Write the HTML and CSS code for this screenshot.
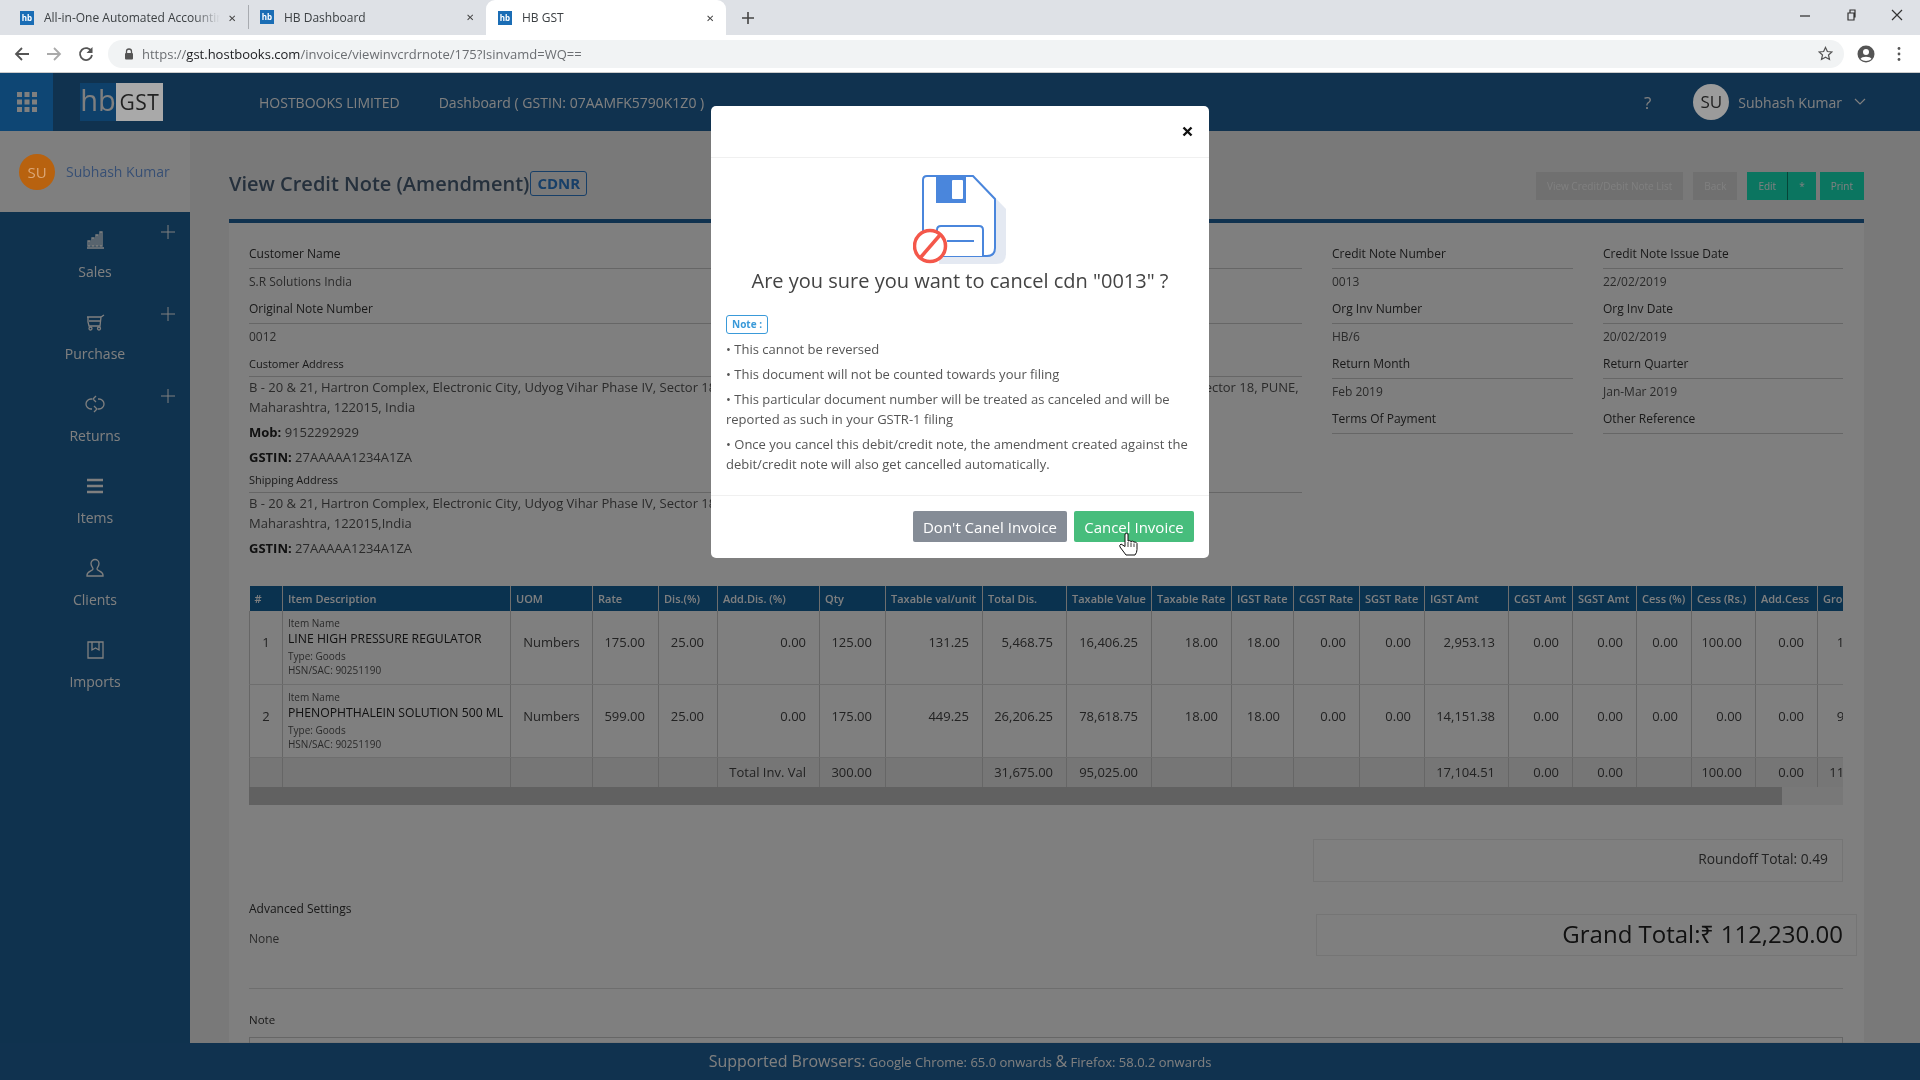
FILE: index.html
```html
<!DOCTYPE html>
<html lang="en">
<head>
  <meta charset="UTF-8">
  <title>HB GST</title>
  <link rel="stylesheet" href="styles.css">
</head>
<body>

  <!-- Browser chrome -->
  <div class="tabstrip">
    <div class="tab tab-first">
      <span class="favicon">hb</span>
      <span class="tab-title tab-fade">All-in-One Automated Accounting Software</span>
      <span class="tab-close">&#10005;</span>
    </div>
    <div class="tab tab-second">
      <span class="favicon">hb</span>
      <span class="tab-title">HB Dashboard</span>
      <span class="tab-close">&#10005;</span>
    </div>
    <div class="tab tab-active">
      <span class="favicon">hb</span>
      <span class="tab-title">HB GST</span>
      <span class="tab-close">&#10005;</span>
    </div>
    <svg class="new-tab" width="12" height="12" viewBox="0 0 12 12"><path d="M6 0v12M0 6h12" stroke="#444" stroke-width="1.6"/></svg>
    <div class="window-controls">
      <svg width="12" height="12" viewBox="0 0 12 12"><path d="M1 7h10" stroke="#444" stroke-width="1.4"/></svg>
      <svg width="12" height="12" viewBox="0 0 12 12"><path d="M3 4h6v7H3zM5 4V1h5v7H9" fill="none" stroke="#333" stroke-width="1.2"/></svg>
      <svg width="12" height="12" viewBox="0 0 12 12"><path d="M1 1l10 10M11 1L1 11" stroke="#333" stroke-width="1.2"/></svg>
    </div>
  </div>
  <div class="toolbar">
    <svg class="nav-btn" width="16" height="16" viewBox="0 0 16 16"><path d="M15 8H2M8 2L2 8l6 6" fill="none" stroke="#555" stroke-width="1.8"/></svg>
    <svg class="nav-btn" width="16" height="16" viewBox="0 0 16 16"><path d="M1 8h13M8 2l6 6-6 6" fill="none" stroke="#aaa" stroke-width="1.8"/></svg>
    <svg class="nav-btn" width="16" height="16" viewBox="0 0 16 16"><path d="M13.5 5.5A6 6 0 1 0 14 9" fill="none" stroke="#555" stroke-width="1.8"/><path d="M14.5 1v6h-6z" fill="#555"/></svg>
    <div class="omnibox">
      <svg width="10" height="12" viewBox="0 0 10 12"><path d="M2.5 5V3.5a2.5 2.5 0 0 1 5 0V5" fill="none" stroke="#555" stroke-width="1.3"/><rect x="1" y="5" width="8" height="6.5" rx="1" fill="#555"/></svg>
      <span class="url"><span class="url-dim">https://</span>gst.hostbooks.com<span class="url-dim">/invoice/viewinvcrdrnote/175?Isinvamd=WQ==</span></span>
      <svg class="star" width="15" height="15" viewBox="0 0 16 16"><path d="M8 1.5l2 4.4 4.8.5-3.6 3.2 1 4.7L8 11.9l-4.2 2.4 1-4.7-3.6-3.2 4.8-.5z" fill="none" stroke="#555" stroke-width="1.3"/></svg>
    </div>
    <svg class="profile" width="18" height="18" viewBox="0 0 18 18"><circle cx="9" cy="9" r="8.5" fill="#555"/><circle cx="9" cy="7" r="3" fill="#fff"/><path d="M3.5 14c1-3 10-3 11 0-3 2.5-8 2.5-11 0z" fill="#fff"/></svg>
    <svg class="menu-dots" width="4" height="16" viewBox="0 0 4 16"><circle cx="2" cy="2.5" r="1.4" fill="#555"/><circle cx="2" cy="8" r="1.4" fill="#555"/><circle cx="2" cy="13.5" r="1.4" fill="#555"/></svg>
  </div>

  <!-- App -->
  <div class="app">
    <header class="topbar">
      <div class="grid-btn">
        <svg width="20" height="20" viewBox="0 0 20 20" fill="#fff"><rect width="5" height="5"/><rect x="7.5" width="5" height="5"/><rect x="15" width="5" height="5"/><rect y="7.5" width="5" height="5"/><rect x="7.5" y="7.5" width="5" height="5"/><rect x="15" y="7.5" width="5" height="5"/><rect y="15" width="5" height="5"/><rect x="7.5" y="15" width="5" height="5"/><rect x="15" y="15" width="5" height="5"/></svg>
      </div>
      <div class="logo"><span class="logo-hb">hb</span><span class="logo-gst">GST</span></div>
      <a class="top-link top-link-company">HOSTBOOKS LIMITED</a>
      <a class="top-link">Dashboard ( GSTIN: 07AAMFK5790K1Z0 )</a>
      <div class="top-right">
        <span class="help">?</span>
        <span class="top-avatar">SU</span>
        <span class="top-user">Subhash Kumar</span>
        <svg width="12" height="8" viewBox="0 0 12 8"><path d="M1 1l5 5 5-5" fill="none" stroke="#fff" stroke-width="1.2"/></svg>
      </div>
    </header>

    <div class="app-body">
      <aside class="sidebar">
        <div class="side-user">
          <span class="side-avatar">SU</span>
          <span class="side-name">Subhash Kumar</span>
        </div>
        <nav class="side-nav">
          <div class="side-item">
            <svg class="side-plus" width="14" height="14" viewBox="0 0 14 14"><path d="M7 0v14M0 7h14"/></svg>
            <svg class="side-icon" width="20" height="20" viewBox="0 0 20 20"><path d="M2 18h17M3 16v-5h2v5zM7 16V8h2v8zM11 16V5h2v11zM15 16V2h2v14z"/></svg>
            <span>Sales</span>
          </div>
          <div class="side-item">
            <svg class="side-plus" width="14" height="14" viewBox="0 0 14 14"><path d="M7 0v14M0 7h14"/></svg>
            <svg class="side-icon" width="20" height="20" viewBox="0 0 20 20"><path d="M2 5h14l3-2M3 5v5l1 4h11l1-9M4 9h12"/><circle cx="5.5" cy="16.5" r="1.5"/><circle cx="14" cy="16.5" r="1.5"/></svg>
            <span>Purchase</span>
          </div>
          <div class="side-item">
            <svg class="side-plus" width="14" height="14" viewBox="0 0 14 14"><path d="M7 0v14M0 7h14"/></svg>
            <svg class="side-icon" width="20" height="20" viewBox="0 0 20 20"><path d="M7 5H6a5 5 0 0 0 0 10h1M13 15h1a5 5 0 0 0 0-10h-1M11 2L8 5l3 3M9 12l3 3-3 3"/></svg>
            <span>Returns</span>
          </div>
          <div class="side-item">
            <svg class="side-icon" width="20" height="20" viewBox="0 0 20 20"><path class="side-thick" d="M2 4h16M2 10h16M2 16h16"/></svg>
            <span>Items</span>
          </div>
          <div class="side-item">
            <svg class="side-icon" width="20" height="20" viewBox="0 0 20 20"><path d="M10 1.500a4 4 0 0 1 4 4c0 3-2 4-2 5.500 0 2 6 2 6 6v1H2v-1c0-4 6-4 6-6 0-1.500-2-2.500-2-5.500a4 4 0 0 1 4-4z"/></svg>
            <span>Clients</span>
          </div>
          <div class="side-item">
            <svg class="side-icon" width="20" height="20" viewBox="0 0 20 20"><path d="M7 2H3v16h15V2h-4M7 2h7v8l-3.500-2L7 10z"/></svg>
            <span>Imports</span>
          </div>
        </nav>
      </aside>

      <main class="main">
        <div class="title-row">
          <h1>View Credit Note (Amendment)</h1>
          <span class="type-badge">CDNR</span>
          <div class="actions">
            <a class="btn btn-grey">View Credit/Debit Note List</a>
            <a class="btn btn-grey btn-back">Back</a>
            <a class="btn btn-green btn-edit">Edit</a>
            <a class="btn btn-green btn-star">*</a>
            <a class="btn btn-green btn-print">Print</a>
          </div>
        </div>

        <section class="panel">
          <div class="details">
            <div class="detail-col">
              <div class="label">Customer Name</div>
              <div class="value">S.R Solutions India</div>
              <div class="label">Original Note Number</div>
              <div class="value">0012</div>
              <div class="label label-small">Customer Address</div>
              <div class="address">B - 20 &amp; 21, Hartron Complex, Electronic City, Udyog Vihar Phase IV, Sector 18, NCR Delhi B - 20 &amp; 21, Hartron Complex, Electronic City, Udyog Vihar Phase IV, Sector 18, PUNE,<br>Maharashtra, 122015, India</div>
              <div class="address-line"><b>Mob:</b> 9152292929</div>
              <div class="address-line"><b>GSTIN:</b> 27AAAAA1234A1ZA</div>
              <div class="label label-small label-ship">Shipping Address</div>
              <div class="address">B - 20 &amp; 21, Hartron Complex, Electronic City, Udyog Vihar Phase IV, Sector 18, PUNE,<br>Maharashtra, 122015,India</div>
              <div class="address-line"><b>GSTIN:</b> 27AAAAA1234A1ZA</div>
            </div>
            <div class="detail-col">
              <div class="label">Credit Note Number</div>
              <div class="value">0013</div>
              <div class="label">Org Inv Number</div>
              <div class="value">HB/6</div>
              <div class="label">Return Month</div>
              <div class="value">Feb 2019</div>
              <div class="label">Terms Of Payment</div>
            </div>
            <div class="detail-col">
              <div class="label">Credit Note Issue Date</div>
              <div class="value">22/02/2019</div>
              <div class="label">Org Inv Date</div>
              <div class="value">20/02/2019</div>
              <div class="label">Return Quarter</div>
              <div class="value">Jan-Mar 2019</div>
              <div class="label">Other Reference</div>
            </div>
          </div>

          <div class="table-wrap">
            <table class="items">
              <colgroup>
                <col width="33"><col width="228"><col width="82"><col width="66"><col width="59"><col width="102"><col width="66">
                <col width="97"><col width="84"><col width="85"><col width="80"><col width="62"><col width="66"><col width="65">
                <col width="84"><col width="64"><col width="64"><col width="55"><col width="64"><col width="62"><col width="91">
              </colgroup>
              <thead>
                <tr>
                  <th>#</th><th>Item Description</th><th>UOM</th><th>Rate</th><th>Dis.(%)</th><th>Add.Dis. (%)</th><th>Qty</th>
                  <th>Taxable val/unit</th><th>Total Dis.</th><th>Taxable Value</th><th>Taxable Rate</th><th>IGST Rate</th><th>CGST Rate</th><th>SGST Rate</th>
                  <th>IGST Amt</th><th>CGST Amt</th><th>SGST Amt</th><th>Cess (%)</th><th>Cess (Rs.)</th><th>Add.Cess</th><th>Gross Total</th>
                </tr>
              </thead>
              <tbody>
                <tr>
                  <td class="center">1</td>
                  <td class="item-cell">
                    <small>Item Name</small>
                    <strong>LINE HIGH PRESSURE REGULATOR</strong>
                    <small class="type">Type: Goods</small>
                    <small>HSN/SAC: 90251190</small>
                  </td>
                  <td class="center">Numbers</td><td>175.00</td><td>25.00</td><td>0.00</td><td>125.00</td>
                  <td>131.25</td><td>5,468.75</td><td>16,406.25</td><td>18.00</td><td>18.00</td><td>0.00</td><td>0.00</td>
                  <td>2,953.13</td><td>0.00</td><td>0.00</td><td>0.00</td><td>100.00</td><td>0.00</td><td>19,459.38</td>
                </tr>
                <tr>
                  <td class="center">2</td>
                  <td class="item-cell">
                    <small>Item Name</small>
                    <strong>PHENOPHTHALEIN SOLUTION 500 ML</strong>
                    <small class="type">Type: Goods</small>
                    <small>HSN/SAC: 90251190</small>
                  </td>
                  <td class="center">Numbers</td><td>599.00</td><td>25.00</td><td>0.00</td><td>175.00</td>
                  <td>449.25</td><td>26,206.25</td><td>78,618.75</td><td>18.00</td><td>18.00</td><td>0.00</td><td>0.00</td>
                  <td>14,151.38</td><td>0.00</td><td>0.00</td><td>0.00</td><td>0.00</td><td>0.00</td><td>92,770.13</td>
                </tr>
                <tr class="total-row">
                  <td></td><td></td><td></td><td></td><td></td><td>Total Inv. Val</td><td>300.00</td>
                  <td></td><td>31,675.00</td><td>95,025.00</td><td></td><td></td><td></td><td></td>
                  <td>17,104.51</td><td>0.00</td><td>0.00</td><td></td><td>100.00</td><td>0.00</td><td>112,229.51</td>
                </tr>
              </tbody>
            </table>
          </div>
          <div class="hscroll"><div class="hscroll-thumb"></div></div>

          <div class="summary">
            <div class="advanced">
              <div class="advanced-title">Advanced Settings</div>
              <div class="advanced-value">None</div>
            </div>
            <div class="totals">
              <div class="roundoff">Roundoff Total: 0.49</div>
              <div class="grand">Grand Total:&#8377; 112,230.00</div>
            </div>
          </div>

          <div class="note-block">
            <div class="note-title">Note</div>
            <div class="note-box"></div>
          </div>
        </section>
      </main>
    </div>

    <footer class="footer">
      <span class="footer-lead">Supported Browsers:</span> Google Chrome: 65.0 onwards <span class="footer-lead">&amp;</span> Firefox: 58.0.2 onwards
    </footer>

    <!-- Cancel dialog -->
    <div class="backdrop">
      <div class="modal">
        <div class="modal-head">
          <svg width="11" height="11" viewBox="0 0 11 11"><path d="M1.500 1.500l8 8M9.500 1.500l-8 8" stroke="#111" stroke-width="2.400"/></svg>
        </div>
        <div class="modal-body">
          <svg class="floppy" width="94" height="90" viewBox="0 0 94 90">
            <path d="M26 6h40l27 28v45q0 10-10 10H26z" fill="#e4e9f2"/>
            <path d="M14 1H60L82 24V73Q82 81 74 81H18Q10 81 10 73V5Q10 1 14 1Z" fill="#fff" stroke="#4a86dc" stroke-width="2"/>
            <path d="M23 1H53V28H23Z" fill="#4a86dc"/>
            <rect x="39" y="5" width="11" height="19" rx="1" fill="#fff"/>
            <path d="M24 81V55Q24 51 28 51H66Q70 51 70 55V81" fill="#fff" stroke="#4a86dc" stroke-width="2"/>
            <path d="M34 66H61" stroke="#4a86dc" stroke-width="2"/>
            <circle cx="17" cy="71" r="15.500" fill="#fff" stroke="#f4574a" stroke-width="3.500"/>
            <path d="M8 82L27 60" stroke="#f4574a" stroke-width="3.500"/>
          </svg>
          <h2>Are you sure you want to cancel cdn "0013" ?</h2>
          <span class="note-badge">Note :</span>
          <p>&bull; This cannot be reversed</p>
          <p>&bull; This document will not be counted towards your filing</p>
          <p>&bull; This particular document number will be treated as canceled and will be reported as such in your GSTR-1 filing</p>
          <p>&bull; Once you cancel this debit/credit note, the amendment created against the debit/credit note will also get cancelled automatically.</p>
        </div>
        <div class="modal-foot">
          <button class="modal-btn modal-btn-grey">Don't Canel Invoice</button>
          <button class="modal-btn modal-btn-green">Cancel Invoice</button>
        </div>
        <svg class="cursor" width="19" height="25" viewBox="0 0 19 25">
          <path d="M6 2q1.500-1.500 3 0v7q2-1 3 .5 1.500-1 3 .5 2-.5 3 1.500v6q0 3-2 5.500H7q-1.500-2-3-4L1 15q-1-2 1-3l4 2.500z" fill="#fff" stroke="#111" stroke-width="1"/>
          <path d="M9 10v5M12 10.500V15M15 11.500V15" stroke="#111" stroke-width=".8"/>
        </svg>
      </div>
    </div>
  </div>

</body>
</html>
```

FILE: styles.css
```css
/* General styles */
* {
  box-sizing: border-box;
}

html, body {
  margin: 0;
  padding: 0;
  height: 1080px;
  overflow: hidden;
}

body {
  font-family: "Open Sans", sans-serif;
  font-size: 13px;
  color: #333;
  background-color: #fff;
  filter: blur(0.4px);
}

/* Browser chrome */
.tabstrip {
  display: flex;
  align-items: stretch;
  height: 35px;
  background-color: #dee1e6;
  font-size: 12px;
  color: #3c4043;
}

.tab {
  display: flex;
  align-items: center;
  height: 35px;
  padding: 0 12px 0 20px;
}

.tab-first {
  width: 248px;
}

.tab-second {
  width: 238px;
  border-left: 1px solid #a8abb0;
  padding-left: 11px;
  height: 24px;
  margin-top: 5px;
}

.tab-active {
  width: 240px;
  background-color: #fff;
  border-radius: 9px 9px 0 0;
  padding-left: 12px;
}

.favicon {
  flex: none;
  width: 14px;
  height: 14px;
  margin-right: 10px;
  background-color: #1a6db5;
  color: #fff;
  font-size: 8px;
  font-weight: 700;
  line-height: 14px;
  text-align: center;
}

.tab-title {
  flex: 1;
  overflow: hidden;
  white-space: nowrap;
}

.tab-fade {
  -webkit-mask-image: linear-gradient(to right, #000 85%, transparent);
  mask-image: linear-gradient(to right, #000 85%, transparent);
}

.tab-close {
  flex: none;
  font-size: 10px;
  color: #444;
  margin-left: 8px;
}

.new-tab {
  align-self: center;
  margin-left: 16px;
}

.window-controls {
  margin-left: auto;
  display: flex;
  gap: 34px;
  padding: 9px 17px 0 0;
}

.toolbar {
  display: flex;
  align-items: center;
  height: 38px;
  background-color: #fff;
  border-bottom: 1px solid #ccc;
  padding-left: 14px;
}

.nav-btn {
  margin-right: 16px;
}

.omnibox {
  display: flex;
  align-items: center;
  width: 1736px;
  height: 28px;
  margin-left: -2px;
  padding: 0 11px 0 16px;
  border-radius: 14px;
  background-color: #f1f3f4;
}

.url {
  margin-left: 8px;
  font-size: 13px;
  color: #202124;
}

.url-dim {
  color: #6b6e72;
}

.star {
  margin-left: auto;
}

.profile {
  margin-left: 13px;
}

.menu-dots {
  margin-left: 22px;
}

/* App shell */
.app {
  position: relative;
  display: flex;
  flex-direction: column;
  height: 1007px;
}

.topbar {
  flex: none;
  display: flex;
  align-items: center;
  height: 58px;
  background-color: #20649e;
  color: #fff;
}

.grid-btn {
  display: flex;
  align-items: center;
  justify-content: center;
  width: 53px;
  height: 58px;
  background-color: #1d8ce8;
}

.logo {
  display: flex;
  align-items: stretch;
  height: 38px;
  margin-left: 27px;
}

.logo-hb {
  width: 36px;
  background-color: #1c80d4;
  font-size: 29px;
  line-height: 34px;
  color: #fff;
  text-align: center;
}

/* these sit brighter than the dialog's dim layer in the capture */
.logo-gst,
.top-avatar,
.side-avatar {
  position: relative;
  z-index: 1;
}

.logo-gst {
  width: 47px;
  background-color: #a9a9a9;
  color: #222;
  font-size: 21px;
  letter-spacing: 0.5px;
  line-height: 38px;
  text-align: center;
}

.top-link {
  margin-left: 39px;
  font-size: 14px;
  color: #fff;
}

.top-link-company {
  margin-left: 96px;
}

.top-right {
  margin-left: auto;
  display: flex;
  align-items: center;
  padding-right: 54px;
}

.help {
  font-size: 17px;
  margin-right: 42px;
}

.top-avatar {
  width: 36px;
  height: 36px;
  border-radius: 50%;
  background-color: #9b9b9b;
  color: #222;
  font-size: 17px;
  line-height: 36px;
  text-align: center;
}

.top-user {
  margin: 0 12px 0 9px;
  font-size: 14px;
}

.app-body {
  flex: 1;
  display: flex;
  min-height: 0;
}

/* Sidebar */
.sidebar {
  flex: none;
  display: flex;
  flex-direction: column;
  width: 190px;
  background-color: #fff;
}

.side-user {
  display: flex;
  align-items: center;
  height: 81px;
  padding-left: 19px;
}

.side-avatar {
  width: 36px;
  height: 36px;
  border-radius: 50%;
  background-color: #b8620f;
  color: #dca878;
  font-size: 15px;
  line-height: 36px;
  text-align: center;
}

.side-name {
  margin-left: 11px;
  font-size: 14px;
  color: #6f9fe8;
}

.side-nav {
  flex: 1;
  background-color: #1f659c;
}

.side-item {
  position: relative;
  display: flex;
  flex-direction: column;
  align-items: center;
  height: 82px;
  padding-top: 18px;
  color: #fff;
  font-size: 14px;
}

.side-item span {
  margin-top: 11.500px;
  line-height: 20px;
}

.side-icon {
  fill: none;
  stroke: #fff;
  stroke-width: 1.300;
}

.side-thick {
  stroke-width: 2.400;
}

.side-plus {
  position: absolute;
  top: 13px;
  right: 15px;
  stroke: #fff;
  stroke-width: 1;
}

/* Main content */
.main {
  flex: 1;
  min-width: 0;
  padding-left: 39px;
  padding-right: 56px;
  background-color: #f2f2f2;
  overflow: hidden;
}

.title-row {
  display: flex;
  align-items: center;
  height: 88px;
  padding-top: 16px;
}

.title-row h1 {
  margin: 0;
  font-size: 20px;
  font-weight: 600;
  color: #4a6078;
}

.type-badge {
  margin-left: 1px;
  padding: 0 6px;
  border: 1px solid #2f7fd0;
  border-radius: 3px;
  color: #2f7fd0;
  font-size: 15px;
  font-weight: 700;
  line-height: 23px;
}

.actions {
  margin-left: auto;
  display: flex;
  height: 28px;
  margin-top: 6px;
}

.btn {
  padding: 0 11px;
  font-size: 10px;
  line-height: 28px;
  color: #fff;
}

.btn-grey {
  background-color: #e0e0e0;
}

.btn-back {
  margin-left: 10px;
}

.btn-green {
  background-color: #16eac0;
}

.btn-edit {
  margin-left: 10px;
  border-right: 1px solid #0d8a70;
}

.btn-print {
  margin-left: 4px;
}

.panel {
  height: 823px;
  padding: 0 21px 0 20px;
  border-top: 4px solid #20649e;
  background-color: #fff;
}

.details {
  display: grid;
  grid-template-columns: 1053px 241px 240px;
  column-gap: 30px;
  padding-top: 21px;
}

.label {
  padding-bottom: 4px;
  border-bottom: 1px solid #ccc;
  font-size: 12px;
  font-weight: 500;
  line-height: 20px;
  color: #333;
}

.label-small {
  padding-bottom: 2px;
  font-size: 11px;
}

.label-ship {
  margin-top: 3px;
}

.value {
  margin: 3px 0 7px;
  font-size: 12px;
  line-height: 20px;
  color: #555;
}

.address {
  margin-top: 1px;
  line-height: 19.500px;
  color: #555;
  font-size: 13px;
  white-space: nowrap;
}

.address-line {
  margin-top: 5px;
  line-height: 20px;
  color: #555;
  font-size: 13px;
}

.address-line b {
  color: #222;
}

/* Items table */
.table-wrap {
  margin-top: 28px;
  overflow: hidden;
}

.items {
  table-layout: fixed;
  width: 1659px;
  border-collapse: collapse;
}

.items th {
  height: 25px;
  padding: 0 0 0 5px;
  border-left: 1px solid #ddd;
  background-color: #14649f;
  color: #fff;
  font-size: 11px;
  font-weight: 600;
  text-align: left;
  white-space: nowrap;
  overflow: hidden;
}

.items th:first-child {
  border-left: 0;
}

.items td {
  height: 73px;
  padding: 0 13px 10px 0;
  border-left: 1px solid #ccc;
  border-bottom: 1px solid #ddd;
  color: #444;
  font-size: 13px;
  text-align: right;
  white-space: nowrap;
}

.items td.center {
  padding-right: 0;
  text-align: center;
}

.items td.item-cell {
  padding: 5px 0 0 5px;
  vertical-align: top;
  text-align: left;
}

.item-cell small {
  display: block;
  font-size: 10px;
  line-height: 14px;
  color: #555;
}

.item-cell strong {
  display: block;
  font-size: 12.200px;
  font-weight: 400;
  line-height: 18px;
  color: #222;
}

.item-cell .type {
  margin-top: 1px;
}

.items .total-row td {
  height: 30px;
  padding-bottom: 0;
  background-color: #ececec;
  border-bottom: 0;
}

.hscroll {
  height: 18px;
  background-color: #f0f0f0;
}

.hscroll-thumb {
  width: 1533px;
  height: 100%;
  background-color: #c2c2c2;
}

/* Totals */
.summary {
  display: flex;
  justify-content: space-between;
  height: 150px;
  margin-top: 34px;
  border-bottom: 1px solid #ddd;
}

.advanced {
  padding-top: 60px;
}

.advanced-title {
  font-size: 12px;
  font-weight: 500;
  line-height: 20px;
  color: #333;
}

.advanced-value {
  margin-top: 10px;
  font-size: 12px;
  line-height: 20px;
  color: #555;
}

.totals {
  display: flex;
  flex-direction: column;
  align-items: flex-end;
}

.roundoff {
  width: 530px;
  height: 43px;
  padding: 9px 14px 0 0;
  border: 1px solid #eaeaea;
  font-size: 13.800px;
  color: #444;
  text-align: right;
}

.grand {
  width: 541px;
  height: 42px;
  margin: 32px -14px 0 0;
  padding-right: 13px;
  border: 1px solid #eaeaea;
  font-size: 24px;
  line-height: 38px;
  color: #222;
  text-align: right;
}

.note-block {
  padding-top: 21px;
}

.note-title {
  font-size: 11.500px;
  line-height: 20px;
  color: #333;
}

.note-box {
  height: 30px;
  margin-top: 7px;
  border: 1px solid #ccc;
}

/* Footer */
.footer {
  flex: none;
  height: 37px;
  background-color: #20649e;
  color: #fff;
  font-size: 13px;
  line-height: 37px;
  text-align: center;
}

.footer-lead {
  font-size: 16px;
}

/* Dialog */
.backdrop {
  position: absolute;
  inset: 0;
  display: flex;
  justify-content: center;
  padding-top: 33px;
  background-color: rgba(0, 0, 0, 0.5);
}

.modal {
  position: relative;
  width: 498px;
  height: 452px;
  background-color: #fff;
  border-radius: 5px;
}

.modal-head {
  display: flex;
  align-items: center;
  justify-content: flex-end;
  height: 52px;
  padding-right: 16px;
  border-bottom: 1px solid #f0f0f0;
}

.modal-body {
  height: 338px;
  padding: 17px 15px 0;
  border-bottom: 1px solid #f0f0f0;
}

.floppy {
  display: block;
  margin: 0 auto;
}

.modal-body h2 {
  margin: 2px 0 0;
  font-size: 20px;
  font-weight: 400;
  line-height: 28px;
  color: #444;
  text-align: center;
}

.note-badge {
  display: inline-block;
  height: 19px;
  margin-top: 20px;
  padding: 0 5px;
  border: 1px solid #3a9ad9;
  border-radius: 3px;
  color: #3a9ad9;
  font-size: 10px;
  font-weight: 700;
  line-height: 17px;
}

.modal-body p {
  margin: 5px 0 0;
  font-size: 13px;
  line-height: 20px;
  color: #555;
}

.modal-foot {
  display: flex;
  justify-content: flex-end;
  gap: 7px;
  padding: 15px 15px 0;
}

.modal-btn {
  height: 31px;
  padding: 0;
  border: 0;
  border-radius: 2px;
  font-family: inherit;
  font-size: 15px;
  color: #fff;
  white-space: nowrap;
}

.modal-btn-grey {
  width: 154px;
  background-color: #858c96;
}

.modal-btn-green {
  width: 120px;
  background-color: #47bd7c;
}

.cursor {
  position: absolute;
  top: 426px;
  left: 408px;
}
```
